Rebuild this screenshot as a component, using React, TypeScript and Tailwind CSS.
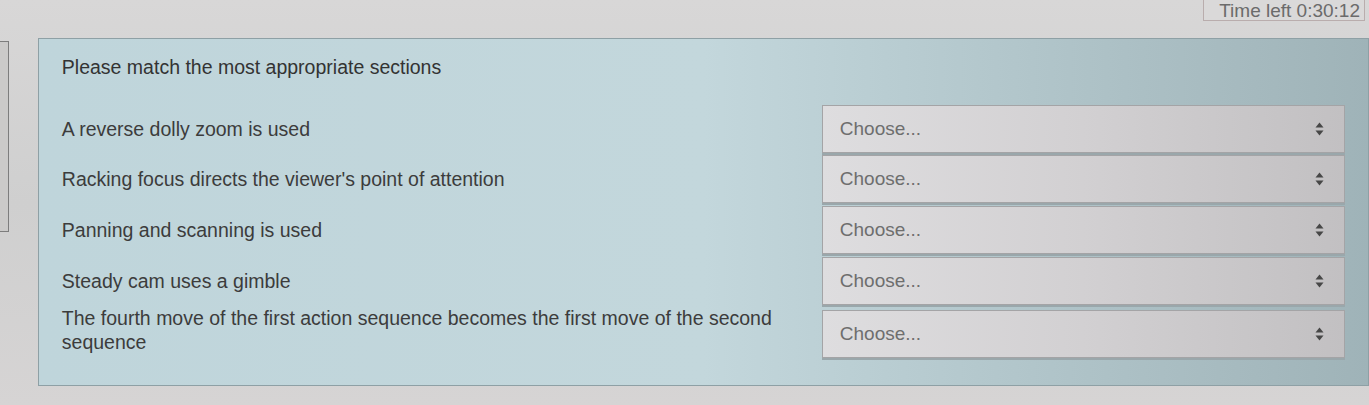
const rows = [
  "A reverse dolly zoom is used",
  "Racking focus directs the viewer's point of attention",
  "Panning and scanning is used",
  "Steady cam uses a gimble",
  "The fourth move of the first action sequence becomes the first move of the second sequence",
];

const rowGap = ["", "", "mt-px", "mt-px", "mt-[3px]"];

function UpDown() {
  return (
    <svg width="9" height="14" viewBox="0 0 9 14" className="shrink-0">
      <path d="M4.5 0.5 L8.5 5.5 L0.5 5.5 Z" fill="#474747" />
      <path d="M0.5 8.5 L8.5 8.5 L4.5 13.5 Z" fill="#474747" />
    </svg>
  );
}

export default function App() {
  return (
    <div
      className="relative w-[1369px] h-[405px] overflow-hidden bg-gradient-to-b from-[#d8d7d7] via-[#cfcfcf] to-[#d6d4d4] text-[#3a3a3a]"
      style={{ fontFamily: '"Liberation Sans", Arial, sans-serif' }}
    >
      {/* timer */}
      <div className="flex justify-end h-[38px]">
        <div className="mr-[4px] h-[22px] -mt-px w-[162px] border border-[#b9adad] bg-[#dad9d9] flex items-center justify-end pr-[4px] text-[19px] leading-none text-[#6b6b6b]">
          Time left 0:30:12
        </div>
      </div>

      <div className="flex items-start">
        {/* left block edge */}
        <div className="mt-[3px] w-[9px] h-[191px] border-y border-r border-[#7d7d7d] bg-[#cbcac9]" />

        {/* question panel */}
        <div className="ml-[29px] w-[1360px] h-[348px] border border-[#8ea0a5] bg-gradient-to-r from-[#bfd5db] via-[#c3d7dc] to-[#9fb3b8] pl-[23px] pt-[16px]">
          <div className="text-[19.5px] leading-[24px] text-[#333]">Please match the most appropriate sections</div>

          <div className="mt-[26px] flex flex-col gap-[2px]">
            {rows.map((r, i) => (
              <div key={r} className={`flex items-center ${rowGap[i]}`}>
                <div className={`w-[760px] shrink-0 pr-[24px] text-[19.5px] leading-[24px] text-[#3c3c3c] ${i === 4 ? "-mt-[8px]" : ""}`}>{r}</div>
                <div className="w-[523px] shrink-0 h-[48px] border border-[#a4a4a6] bg-gradient-to-r from-[#dedddf] via-[#d2d0d2] to-[#c2c0c2] shadow-[0_2px_0_#9aa7ab] flex items-center justify-between pl-[17px] pr-[20px]">
                  <span className="text-[19px] text-[#6e6e6e]">Choose...</span>
                  <UpDown />
                </div>
              </div>
            ))}
          </div>
        </div>
      </div>
    </div>
  );
}
